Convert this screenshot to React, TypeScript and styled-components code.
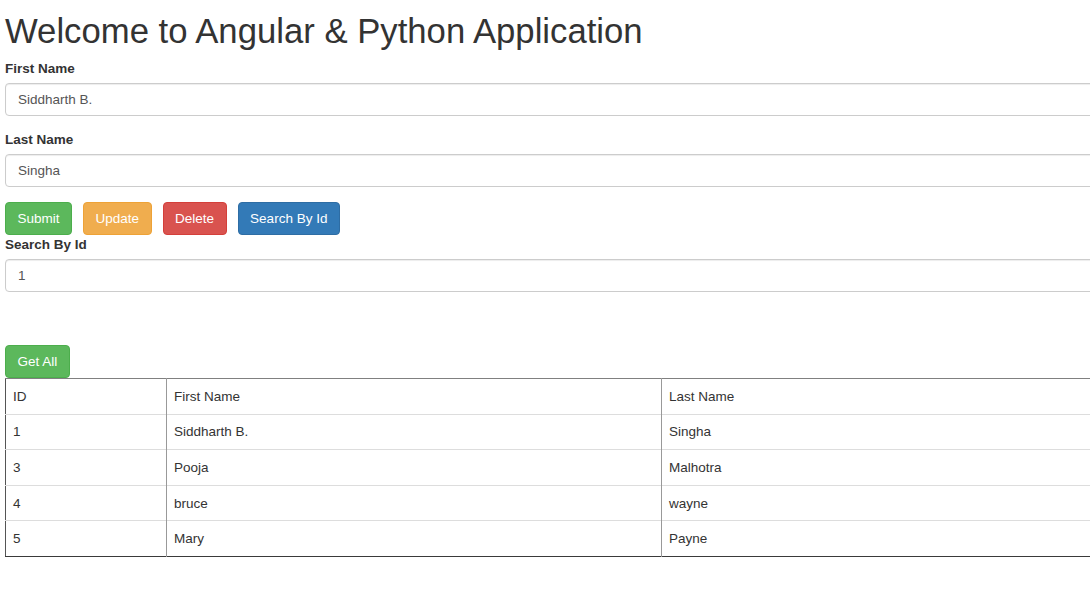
import React, { FC } from 'react'
import styled, { createGlobalStyle } from 'styled-components'

const GlobalStyle = createGlobalStyle`
  html, body {
    margin: 0;
    padding: 0;
    background: #fff;
    overflow: hidden;
  }
  body {
    font-family: 'Liberation Sans', Arial, Helvetica, sans-serif;
    font-size: 13.5px;
    color: #333;
  }
`

const Page = styled.div`
  width: 1125px;
  padding: 12px 0 40px 5px;
`

const Title = styled.h1`
  margin: 0 0 10px;
  font-size: 34.7px;
  line-height: 38px;
  font-weight: 400;
  color: #333;
`

const FormGroup = styled.div<{ $gap?: number }>`
  margin-bottom: ${(p) => (p.$gap ?? 15)}px;
`

const Label = styled.label<{ $tight?: boolean }>`
  display: block;
  margin-bottom: 5px;
  padding-top: ${(p) => (p.$tight ? 1 : 0)}px;
  font-size: 13.5px;
  line-height: 18px;
  font-weight: 700;
  color: #333;
`

const Input = styled.input`
  display: block;
  box-sizing: border-box;
  width: 100%;
  height: 33px;
  padding: 6px 12px;
  font-family: inherit;
  font-size: 13.5px;
  color: #555;
  background: #fff;
  border: 1px solid #ccc;
  border-radius: 4px;
  box-shadow: inset 0 1px 1px rgba(0, 0, 0, 0.075);
  outline: none;
`

const ButtonRow = styled.div`
  display: flex;
  gap: 11px;
`

const palette = {
  success: { bg: '#5cb85c', border: '#4cae4c' },
  warning: { bg: '#f0ad4e', border: '#eea236' },
  danger: { bg: '#d9534f', border: '#d43f3a' },
  primary: { bg: '#337ab7', border: '#2e6da4' },
}

type Variant = keyof typeof palette

const Button = styled.button<{ $variant: Variant }>`
  box-sizing: border-box;
  height: 33px;
  padding: 6px 11.5px;
  font-family: inherit;
  font-size: 13.5px;
  line-height: 19px;
  color: #fff;
  background: ${(p) => palette[p.$variant].bg};
  border: 1px solid ${(p) => palette[p.$variant].border};
  border-radius: 4px;
  cursor: pointer;
`

const Table = styled.table`
  width: 100%;
  border-collapse: collapse;
  border-top: 1px solid #808080;
  border-left: 1px solid #555;
  border-bottom: 1px solid #3a3a3a;
  font-size: 13.5px;
  color: #333;
`

const Cell = styled.td<{ $width?: number }>`
  box-sizing: border-box;
  height: 35.6px;
  padding: 0 7px;
  text-align: left;
  font-weight: 400;
  border-top: 1px solid #ddd;
  border-left: 1px solid #999;
  width: ${(p) => (p.$width ? `${p.$width}px` : 'auto')};

  &:first-child {
    border-left: none;
  }

  tr:first-child > & {
    border-top: none;
  }
`

const rows = [
  { id: 1, first: 'Siddharth B.', last: 'Singha' },
  { id: 3, first: 'Pooja', last: 'Malhotra' },
  { id: 4, first: 'bruce', last: 'wayne' },
  { id: 5, first: 'Mary', last: 'Payne' },
]

const App: FC = () => {
  return (
    <>
      <GlobalStyle />
      <Page>
        <Title>Welcome to Angular &amp; Python Application</Title>

        <FormGroup>
          <Label>First Name</Label>
          <Input defaultValue="Siddharth B." />
        </FormGroup>

        <FormGroup>
          <Label>Last Name</Label>
          <Input defaultValue="Singha" />
        </FormGroup>

        <ButtonRow>
          <Button $variant="success">Submit</Button>
          <Button $variant="warning">Update</Button>
          <Button $variant="danger">Delete</Button>
          <Button $variant="primary">Search By Id</Button>
        </ButtonRow>

        <FormGroup $gap={53}>
          <Label $tight>Search By Id</Label>
          <Input defaultValue="1" />
        </FormGroup>

        <ButtonRow>
          <Button $variant="success">Get All</Button>
        </ButtonRow>

        <Table>
          <tbody>
            <tr>
              <Cell $width={161}>ID</Cell>
              <Cell $width={495}>First Name</Cell>
              <Cell>Last Name</Cell>
            </tr>
            {rows.map((r) => (
              <tr key={r.id}>
                <Cell>{r.id}</Cell>
                <Cell>{r.first}</Cell>
                <Cell>{r.last}</Cell>
              </tr>
            ))}
          </tbody>
        </Table>
      </Page>
    </>
  )
}

export default App
